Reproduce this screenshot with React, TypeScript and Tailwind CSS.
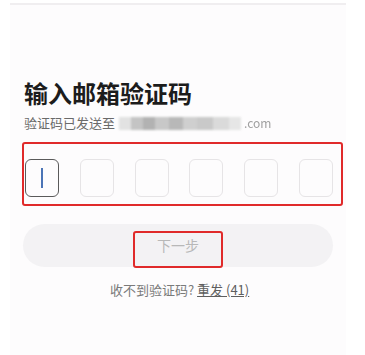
import React from 'react';

const font = { fontFamily: '"Noto Sans CJK SC", "Noto Sans", sans-serif' };

const CodeBox: React.FC<{ active?: boolean }> = ({ active }) => (
  <div
    className={
      'w-[34px] h-[38px] rounded-[6px] flex items-center justify-center ' +
      (active ? 'border-[1.5px] border-[#5a5a5a]' : 'border border-[#e6e4e6]')
    }
  >
    {active && <div className="w-[2px] h-[20px] bg-[#4b74b6]" />}
  </div>
);

export default function App() {
  return (
    <div className="w-[365px] h-[355px] bg-white flex overflow-hidden" style={font}>
      <div className="ml-[10px] w-[336px] h-full bg-[#fdfcfd] border-t-[2px] border-[#f0eef0] mt-[3px] flex flex-col">
        <div className="pl-[14px] pt-[73px] text-[24px] leading-[29px] font-bold text-[#1c1c1c]">
          输入邮箱验证码
        </div>
        <div className="pl-[14px] mt-[7px] flex items-center h-[18px]">
          <span className="text-[13px] text-[#6a6a6a]">验证码已发送至</span>
          <div className="flex h-[13px] ml-[4px] blur-[1px]">
            <div className="w-[12px] bg-[#e2e2e2]" />
            <div className="w-[12px] bg-[#c4c4c4]" />
            <div className="w-[12px] bg-[#b2b2b2]" />
            <div className="w-[14px] bg-[#c8c8c8]" />
            <div className="w-[14px] bg-[#b8b8b8]" />
            <div className="w-[14px] bg-[#cfcfcf]" />
            <div className="w-[16px] bg-[#c9c9c9]" />
            <div className="w-[16px] bg-[#dadada]" />
            <div className="w-[12px] bg-[#e6e6e6]" />
          </div>
          <span className="ml-[3px] text-[12px] text-[#a0a0a0] blur-[0.6px]">.com</span>
        </div>
        <div className="ml-[12px] mt-[10px] w-[321px] h-[64px] border-2 border-[#e02a2a] rounded-[3px] pl-[1px] pr-[8px] pt-[15px] flex justify-between items-start">
          <CodeBox active />
          <CodeBox />
          <CodeBox />
          <CodeBox />
          <CodeBox />
          <CodeBox />
        </div>
        <div className="relative ml-[13px] mt-[18px] w-[310px] h-[43px] rounded-full bg-[#f3f2f4] flex items-center justify-center">
          <span className="text-[14px] text-[#b8b8b8]">下一步</span>
          <div className="absolute left-[110px] top-[7px] w-[90px] h-[37px] border-2 border-[#e02a2a] rounded-[3px]" />
        </div>
        <div className="mt-[13px] ml-[100px] text-[13px] text-[#7a7a7a]">
          收不到验证码? <span className="underline text-[#5e5e5e]">重发 (41)</span>
        </div>
      </div>
    </div>
  );
}
